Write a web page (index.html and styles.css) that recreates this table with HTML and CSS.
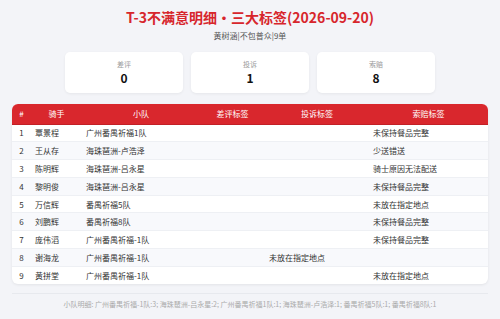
FILE: index.html
```html
<!DOCTYPE html>
<html lang="zh">
<head>
<meta charset="utf-8">
<link rel="stylesheet" href="styles.css">
</head>
<body>
<div class="page">
  <h1 class="title">T-3不满意明细・三大标签(2026-09-20)</h1>
  <div class="subtitle">黄树涵|不包普众|9单</div>
  <div class="cards">
    <div class="card"><div class="card-label">差评</div><div class="card-value">0</div></div>
    <div class="card"><div class="card-label">投诉</div><div class="card-value">1</div></div>
    <div class="card"><div class="card-label">索赔</div><div class="card-value">8</div></div>
  </div>
  <div class="table-wrap">
    <table class="tbl">
      <colgroup>
        <col class="c-no"><col class="c-rider"><col class="c-team"><col class="c-bad"><col class="c-comp"><col class="c-claim">
      </colgroup>
      <thead>
        <tr><th>#</th><th>骑手</th><th>小队</th><th>差评标签</th><th>投诉标签</th><th>索赔标签</th></tr>
      </thead>
      <tbody>
        <tr><td class="no">1</td><td>覃景程</td><td>广州番禺祈福1队</td><td></td><td></td><td>未保持餐品完整</td></tr>
        <tr><td class="no">2</td><td>王从存</td><td>海珠琶洲-卢浩泽</td><td></td><td></td><td>少送错送</td></tr>
        <tr><td class="no">3</td><td>陈明辉</td><td>海珠琶洲-吕永星</td><td></td><td></td><td>骑士原因无法配送</td></tr>
        <tr><td class="no">4</td><td>黎明俊</td><td>海珠琶洲-吕永星</td><td></td><td></td><td>未保持餐品完整</td></tr>
        <tr><td class="no">5</td><td>万信辉</td><td>番禺祈福5队</td><td></td><td></td><td>未放在指定地点</td></tr>
        <tr><td class="no">6</td><td>刘鹏辉</td><td>番禺祈福8队</td><td></td><td></td><td>未保持餐品完整</td></tr>
        <tr><td class="no">7</td><td>庞伟滔</td><td>广州番禺祈福-1队</td><td></td><td></td><td>未保持餐品完整</td></tr>
        <tr><td class="no">8</td><td>谢海龙</td><td>广州番禺祈福-1队</td><td></td><td>未放在指定地点</td><td></td></tr>
        <tr><td class="no">9</td><td>黄拼堂</td><td>广州番禺祈福-1队</td><td></td><td></td><td>未放在指定地点</td></tr>
      </tbody>
    </table>
  </div>
  <div class="footer">小队明细: 广州番禺祈福-1队:3; 海珠琶洲-吕永星:2; 广州番禺祈福1队:1; 海珠琶洲-卢浩泽:1; 番禺祈福5队:1; 番禺祈福8队:1</div>
</div>
</body>
</html>
```
FILE: styles.css
```css
* { box-sizing: border-box; }
html, body {
  margin: 0;
  padding: 0;
  background: #f3f4f8;
  font-family: "Noto Sans CJK SC", "Noto Sans", sans-serif;
}
.page {
  width: 500px;
  height: 319px;
  padding: 7px 12px 0;
}
.title {
  margin: 0;
  text-align: center;
  font-size: 14px;
  line-height: 20px;
  font-weight: 700;
  color: #d7262c;
}
.subtitle {
  margin-top: 3px;
  text-align: center;
  font-size: 8px;
  line-height: 12px;
  color: #555;
}
.cards {
  width: 370px;
  margin: 10px auto 0;
  display: grid;
  grid-template-columns: repeat(3, 1fr);
  gap: 8px;
}
.card {
  background: #fff;
  border-radius: 5px;
  height: 41px;
  box-shadow: 0 1px 3px rgba(0,0,0,0.06);
  display: flex;
  flex-direction: column;
  align-items: center;
  padding-top: 7px;
}
.card-label {
  font-size: 7px;
  line-height: 10px;
  color: #999;
}
.card-value {
  margin-top: 2px;
  font-size: 12px;
  line-height: 14px;
  font-weight: 700;
  color: #111;
}
.table-wrap {
  margin-top: 11px;
  background: #fff;
  border-radius: 6px;
  overflow: hidden;
  box-shadow: 0 1px 3px rgba(0,0,0,0.07);
}
.tbl {
  width: 476px;
  border-collapse: collapse;
  table-layout: fixed;
  font-size: 8px;
  color: #333;
}
.c-no { width: 19px; }
.c-rider { width: 51px; }
.c-team { width: 118px; }
.c-bad { width: 65px; }
.c-comp { width: 104px; }
.c-claim { width: 119px; }
.tbl th {
  background: #d9272d;
  color: #fff;
  font-weight: 400;
  height: 20px;
  padding: 0;
  text-align: center;
  border-bottom: 1px solid #c22026;
}
.tbl td {
  height: 17.8px;
  padding: 0 0 0 4px;
  white-space: nowrap;
  border-top: 1px solid #eef0f4;
}
.tbl td.no {
  padding: 0;
  text-align: center;
}
.tbl tbody tr:nth-child(even) td { background: #f8f9fc; }
.tbl tbody tr:first-child td { border-top: none; }
.footer {
  margin-top: 9px;
  border-top: 1px solid #e7e9ee;
  padding-top: 5px;
  text-align: center;
  font-size: 7px;
  line-height: 10px;
  color: #aaa;
  white-space: nowrap;
}
```
